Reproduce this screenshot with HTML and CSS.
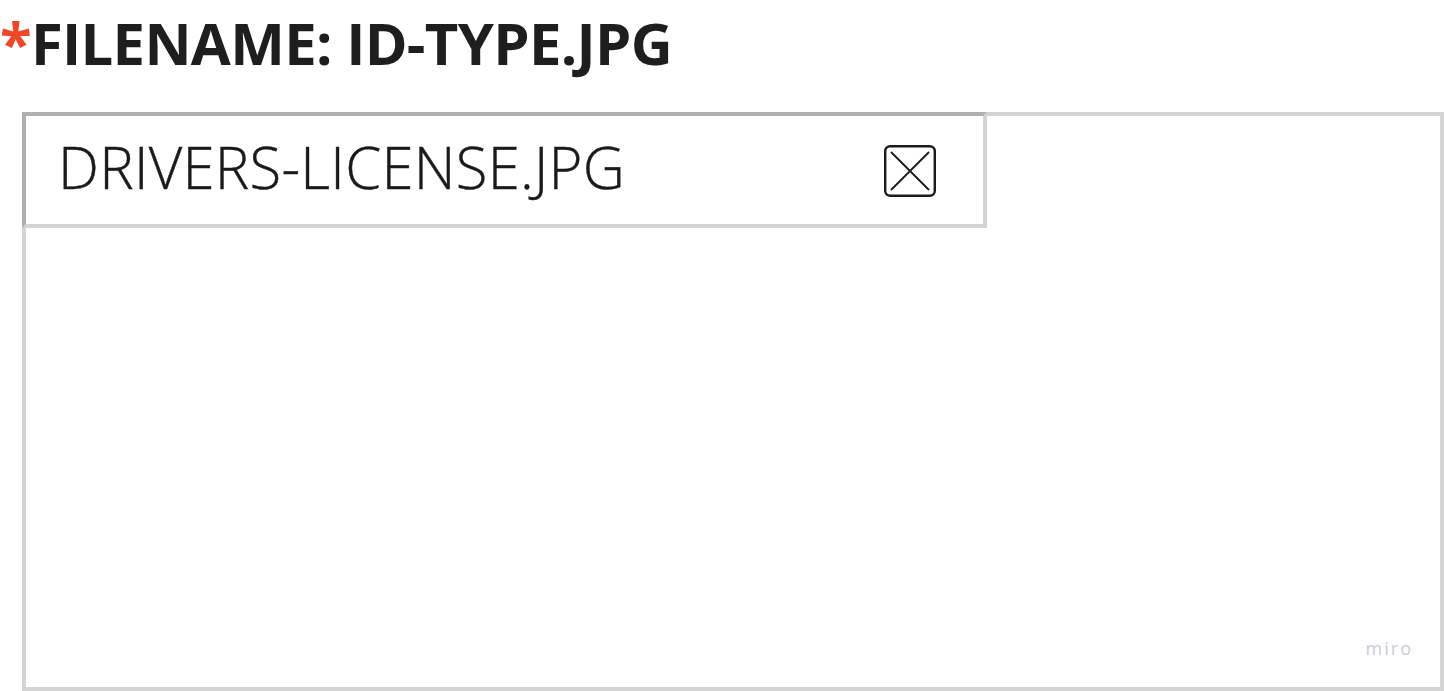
FILE: index.html
```html
<!DOCTYPE html>
<html>
<head>
<meta charset="utf-8">
<link rel="stylesheet" href="styles.css">
</head>
<body>
<h1 class="title"><span class="req">*</span>FILENAME: ID-TYPE.JPG</h1>
<div class="dropbox">
  <div class="file-tab">
    <span class="file-name">DRIVERS-LICENSE.JPG</span>
    <svg class="close" width="52" height="52" viewBox="0 0 52 52">
      <rect x="1.2" y="1.2" width="49.6" height="49.6" rx="5" fill="none" stroke="#1a1a1a" stroke-width="2.4"/>
      <path d="M7 7 L45 45 M45 7 L7 45" stroke="#1a1a1a" stroke-width="1.8" fill="none"/>
    </svg>
  </div>
  <div class="watermark">miro</div>
</div>
</body>
</html>
```

FILE: styles.css
```css
html, body {
  margin: 0;
  padding: 0;
  background: #ffffff;
}
body {
  width: 1445px;
  height: 691px;
  overflow: hidden;
  font-family: "Open Sans", "Liberation Sans", sans-serif;
  color: #1e1e1e;
}
.title {
  margin: 0;
  height: 112px;
  font-size: 58px;
  font-weight: 700;
  line-height: 86px;
  letter-spacing: -0.7px;
  color: #1e1e1e;
}
.req {
  color: #f24726;
}
.dropbox {
  box-sizing: border-box;
  margin-left: 22px;
  width: 1422px;
  height: 579px;
  border: 4px solid #d4d4d4;
  display: flex;
  flex-direction: column;
  justify-content: space-between;
}
.file-tab {
  box-sizing: border-box;
  margin: -4px 0 0 -4px;
  width: 965px;
  height: 116px;
  border: 4px solid #d4d4d4;
  border-top-color: #b0b0b0;
  border-left-color: #b0b0b0;
  background: #fff;
  display: flex;
  align-items: center;
  justify-content: space-between;
  padding: 0 47px 8px 32px;
}
.file-name {
  font-size: 58px;
  font-weight: 300;
  letter-spacing: 0.25px;
  color: #1a1a1a;
  -webkit-text-stroke: 0.4px #1a1a1a;
}
.close {
  display: block;
  flex: none;
  margin-top: 10px;
}
.watermark {
  align-self: flex-end;
  margin: 0 27px 27px 0;
  font-size: 18px;
  font-weight: 400;
  letter-spacing: 2px;
  color: #c9cbdb;
}
```
